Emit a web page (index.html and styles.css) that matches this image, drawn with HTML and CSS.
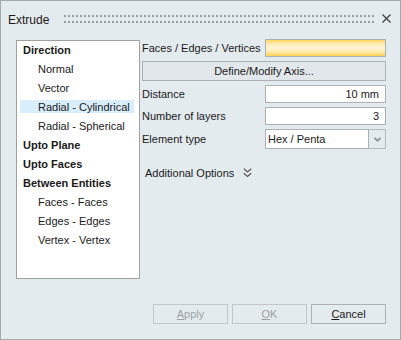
FILE: index.html
```html
<!DOCTYPE html>
<html>
<head>
<meta charset="utf-8">
<link rel="stylesheet" href="styles.css">
</head>
<body>
<div class="window">
  <div class="titlebar">
    <span class="title">Extrude</span>
    <div class="grip"></div>
    <svg class="close" width="9" height="9" viewBox="0 0 9 9"><path d="M0.5 0.5 L8.5 8.5 M8.5 0.5 L0.5 8.5" stroke="#3c3c3c" stroke-width="1.2" fill="none"/></svg>
  </div>
  <div class="main">
    <ul class="tree">
      <li class="node">Direction</li>
      <li class="leaf">Normal</li>
      <li class="leaf">Vector</li>
      <li class="leaf selected">Radial - Cylindrical</li>
      <li class="leaf">Radial - Spherical</li>
      <li class="node">Upto Plane</li>
      <li class="node">Upto Faces</li>
      <li class="node">Between Entities</li>
      <li class="leaf">Faces - Faces</li>
      <li class="leaf">Edges - Edges</li>
      <li class="leaf">Vertex - Vertex</li>
    </ul>
    <div class="form">
      <span class="lbl">Faces / Edges / Vertices</span>
      <div class="picker"></div>
      <button class="btn wide">Define/Modify Axis...</button>
      <span class="lbl">Distance</span>
      <div class="input">10 mm</div>
      <span class="lbl">Number of layers</span>
      <div class="input">3</div>
      <span class="lbl">Element type</span>
      <div class="select">
        <span class="select-text">Hex / Penta</span>
        <span class="select-btn"><svg width="7" height="5" viewBox="0 0 7 5"><path d="M0.5 0.8 L3.5 3.8 L6.5 0.8" stroke="#8a8a8a" stroke-width="1.6" fill="none"/></svg></span>
      </div>
      <div class="more">
        <span>Additional Options</span>
        <svg width="9" height="10" viewBox="0 0 9 10"><path d="M0.8 0.8 L4.5 4 L8.2 0.8 M0.8 5.3 L4.5 8.5 L8.2 5.3" stroke="#555" stroke-width="1.2" fill="none"/></svg>
      </div>
    </div>
  </div>
  <div class="footer">
    <button class="btn action" disabled><u>A</u>pply</button>
    <button class="btn action" disabled><u>O</u>K</button>
    <button class="btn action"><u>C</u>ancel</button>
  </div>
</div>
</body>
</html>
```
FILE: styles.css
```css
* { box-sizing: border-box; }
html, body { margin: 0; padding: 0; }
body {
  font-family: "Liberation Sans", Arial, sans-serif;
  font-size: 11px;
  color: #1a1a1a;
}
.window {
  width: 401px;
  height: 340px;
  border: 1px solid #a3a9ae;
  background: #e4ebef;
  display: flex;
  flex-direction: column;
}
.titlebar {
  height: 38px;
  display: flex;
  align-items: center;
  padding-left: 7px;
  flex-shrink: 0;
}
.title {
  font-size: 12px;
  color: #231818;
}
.grip {
  flex: 1;
  align-self: flex-start;
  margin-top: 14px;
  margin-left: 15px;
  margin-right: 8px;
  height: 8px;
  background:
    linear-gradient(to right, transparent 2px, #e4ebef 2px) 0 0 / 4px 6px,
    linear-gradient(to bottom, #9a9ea2 2px, transparent 2px) 0 0 / 4px 6px;
}
.close {
  align-self: flex-start;
  margin-top: 13px;
  margin-right: 9px;
  display: block;
}
.main {
  display: flex;
  align-items: flex-start;
}
.tree {
  list-style: none;
  margin: 1px 0 0 15px;
  padding: 0;
  width: 124px;
  height: 239px;
  background: #fff;
  border: 1px solid #a0a0a0;
}
.tree li {
  height: 19px;
  line-height: 19px;
  margin: 0 5px 0 3px;
  white-space: nowrap;
}
.node {
  font-weight: bold;
  padding-left: 3px;
}
.leaf {
  padding-left: 18px;
}
.selected {
  background: linear-gradient(to bottom, transparent 2px, #d9eefb 2px, #d9eefb 15px, transparent 15px);
}
.form {
  margin-left: 2px;
  width: 244px;
  display: grid;
  grid-template-columns: 1fr 121px;
  row-gap: 4px;
  align-items: center;
}
.lbl {
  white-space: nowrap;
}
.picker {
  height: 18px;
  border: 1px solid #a8b0b8;
  background: linear-gradient(to bottom, #fbd55a 0%, #ffeeb8 25%, #fff4d6 50%, #ffeaa8 75%, #fbd04e 100%);
}
.btn {
  font-family: "Liberation Sans", Arial, sans-serif;
  font-size: 11px;
  color: #1a1a1a;
  background: #e2e7eb;
  border: 1px solid #adb1b5;
  padding: 0;
  height: 20px;
}
.wide {
  grid-column: 1 / span 2;
}
.input {
  height: 18px;
  line-height: 16px;
  border: 1px solid #adb0b4;
  background: #fff;
  text-align: right;
  padding-right: 6px;
  font-size: 11px;
}
.select {
  height: 20px;
  display: flex;
}
.select-text {
  flex: 1;
  border: 1px solid #adb0b4;
  background: #fff;
  line-height: 18px;
  padding-left: 2px;
  font-size: 11px;
}
.select-btn {
  width: 17px;
  border: 1px solid #b5b8bb;
  border-left: none;
  background: #e4ebef;
  display: flex;
  align-items: center;
  justify-content: center;
}
.select-btn svg { display: block; }
.more {
  grid-column: 1 / span 2;
  margin-top: 10px;
  height: 19px;
  display: flex;
  align-items: center;
  gap: 9px;
  padding-left: 3px;
}
.more svg { display: block; }
.footer {
  margin-top: auto;
  display: flex;
  justify-content: flex-end;
  gap: 4px;
  padding: 0 14px 15px 0;
}
.action {
  width: 75px;
  background: #e4ebef;
  border-color: #aeb1b4;
}
.action:disabled {
  color: #9c9fa2;
  border-color: #c3c6c9;
}
.action u {
  text-decoration-thickness: 1px;
}
```
